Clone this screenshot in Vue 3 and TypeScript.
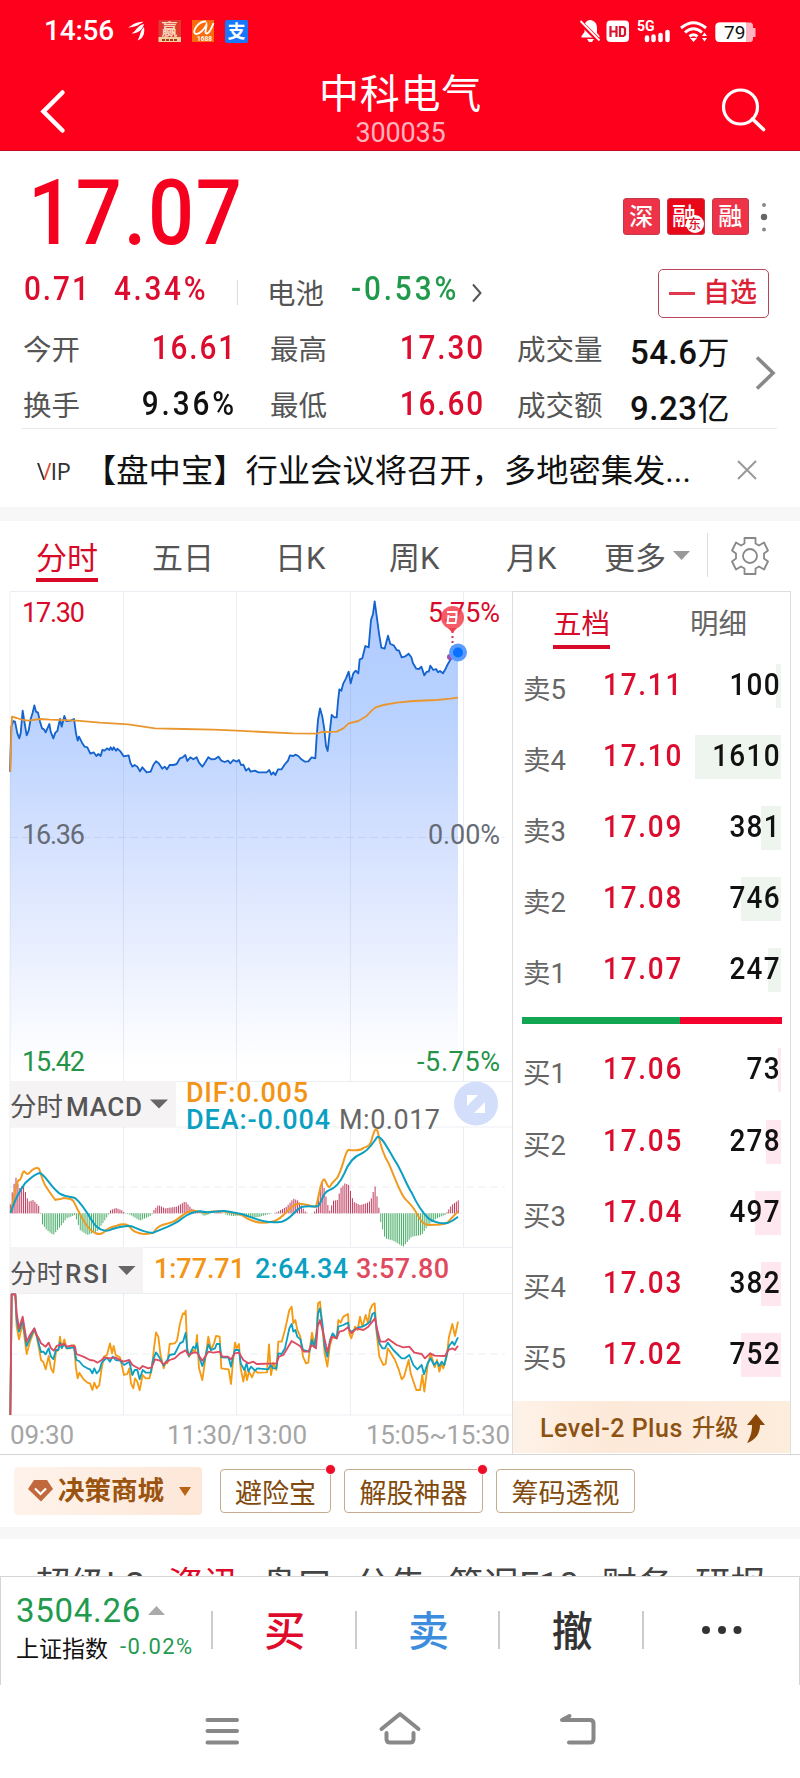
<script setup lang="ts">
interface Level { name: string; price: string; qty: string; bar: number }

const sells: Level[] = [
  { name: '卖5', price: '17.11', qty: '100', bar: 5 },
  { name: '卖4', price: '17.10', qty: '1610', bar: 86 },
  { name: '卖3', price: '17.09', qty: '381', bar: 20 },
  { name: '卖2', price: '17.08', qty: '746', bar: 40 },
  { name: '卖1', price: '17.07', qty: '247', bar: 13 },
]
const buys: Level[] = [
  { name: '买1', price: '17.06', qty: '73', bar: 3 },
  { name: '买2', price: '17.05', qty: '278', bar: 15 },
  { name: '买3', price: '17.04', qty: '497', bar: 26 },
  { name: '买4', price: '17.03', qty: '382', bar: 20 },
  { name: '买5', price: '17.02', qty: '752', bar: 40 },
]

const price =
  '30,755 34,620 40,603 45,605 52,640 58,655 62,640 68,572 74,610 80,646 86,632 92,597 98,578 103,556 108,575 114,578 120,605 126,625 132,628 137,637 148,612 152,635 160,655 166,638 172,633 180,597 185,620 193,588 199,603 212,602 222,597 228,640 233,662 237,650 246,668 254,680 262,682 271,701 281,697 289,708 295,702 302,708 307,690 314,692 321,685 328,690 332,682 337,690 341,682 348,692 352,686 362,695 371,709 386,706 391,728 397,740 404,735 412,740 420,754 427,742 440,757 452,755 460,735 468,724 476,730 487,746 494,740 501,748 509,735 520,735 530,732 540,715 548,712 556,705 562,723 571,712 580,718 590,712 597,728 607,740 615,728 625,712 634,718 645,717 655,710 664,722 674,726 684,722 691,730 700,720 710,725 717,720 723,735 730,734 738,752 746,745 752,755 765,752 775,757 800,757 808,750 814,764 820,757 826,765 834,748 845,748 853,735 864,722 870,706 880,708 886,704 895,708 904,718 915,725 925,724 935,712 946,715 950,650 954,600 960,565 967,590 973,628 978,678 983,693 990,630 995,585 1003,592 1010,592 1014,545 1018,508 1024,512 1030,490 1038,475 1046,455 1052,490 1060,460 1067,452 1075,460 1079,418 1087,415 1096,378 1106,382 1113,300 1119,282 1124,244 1131,295 1137,340 1144,383 1154,386 1164,347 1171,372 1181,376 1190,390 1197,392 1205,412 1216,409 1226,401 1234,412 1239,430 1249,446 1257,447 1264,440 1273,466 1280,455 1286,455 1291,437 1300,450 1308,447 1314,457 1320,453 1329,460 1336,448 1342,435 1349,423 1358,405 1374,398'
const priceArea = `${price} 1374,1640 30,1640`
const average =
  '31,755 34,640 36,590 50,594 65,599 85,602 120,597 150,599 230,602 300,608 385,613 425,619 465,625 550,627 640,629 710,632 790,636 880,640 950,641 965,636 1010,635 1030,625 1046,610 1075,603 1100,588 1115,572 1127,562 1150,555 1190,548 1240,543 1310,540 1350,536 1374,533'

const dif =
  'M32,518 C42,480 46,430 56,420 C64,425 66,395 72,394 C80,402 82,404 88,399 C96,388 110,380 117,386 C124,405 130,430 138,440 C146,452 152,462 166,480 C174,476 180,480 190,474 C204,476 218,474 224,490 C238,520 258,560 275,572 C290,584 302,586 312,576 C322,565 335,560 350,557 C370,550 386,552 395,568 C410,582 440,586 460,578 C475,550 500,555 520,545 C540,535 555,515 575,512 C590,512 605,518 620,518 C660,508 700,518 725,525 C745,540 775,555 815,545 C845,544 865,500 890,492 C910,488 935,500 948,500 C956,475 962,420 973,418 C979,425 984,446 990,440 C1002,415 1010,425 1018,400 C1030,375 1038,325 1048,330 C1065,332 1085,330 1090,324 C1100,318 1110,325 1118,288 C1124,270 1128,258 1134,278 C1142,322 1150,345 1166,370 C1180,400 1195,450 1214,475 C1228,490 1240,500 1250,520 C1260,540 1270,555 1284,555 C1310,552 1330,558 1345,545 C1360,528 1368,520 1374,515'
const dea =
  'M32,518 C44,480 60,450 75,430 C90,415 105,402 119,399 C135,402 150,440 178,460 C195,470 210,470 225,474 C245,490 260,515 278,545 C292,568 315,578 335,568 C355,562 375,555 395,559 C420,570 445,582 460,578 C490,565 525,555 548,534 C570,518 585,515 600,514 C630,522 660,510 680,514 C710,518 735,525 755,532 C785,545 815,550 845,545 C870,540 885,510 905,501 C925,496 945,502 955,498 C968,480 970,455 985,452 C1005,445 1020,430 1033,400 C1045,370 1060,350 1082,342 C1110,330 1120,305 1133,290 C1148,290 1168,335 1190,370 C1210,405 1220,435 1236,460 C1250,490 1270,520 1285,535 C1305,550 1330,552 1345,548 C1360,542 1368,535 1374,530'

const rsi1 =
  '31,1125 35,763 46,763 50,860 57,898 68,850 80,942 90,905 103,870 110,890 118,930 123,960 130,966 137,988 146,948 153,985 160,998 168,935 175,930 180,890 185,925 193,898 200,925 210,925 216,920 222,915 228,985 233,1015 238,998 250,1017 262,1028 270,1030 277,1050 283,1028 290,1045 298,1035 305,985 312,950 321,945 330,910 336,940 341,918 347,945 360,952 372,1005 382,1002 388,985 393,1030 400,1045 405,1015 412,1025 419,1051 428,1005 437,1015 448,1015 455,990 462,925 468,877 475,890 481,940 491,985 497,965 502,970 509,912 524,910 531,902 540,850 549,820 554,823 557,812 562,930 567,950 580,930 586,935 591,885 597,985 607,1020 612,985 625,890 633,930 642,910 648,888 659,890 664,985 686,988 693,1032 698,975 705,908 710,925 717,912 722,985 730,1025 736,990 741,1020 747,995 756,1012 765,990 772,998 801,997 807,913 813,1005 820,968 829,990 835,905 845,905 855,870 868,810 875,800 880,850 886,840 892,870 901,890 909,950 918,970 925,968 929,930 936,878 944,920 951,860 954,790 960,785 967,860 974,940 982,980 990,915 998,890 1010,895 1015,840 1022,848 1030,830 1044,822 1048,880 1054,895 1065,860 1073,870 1080,830 1087,860 1097,825 1104,850 1110,810 1117,795 1124,790 1130,880 1138,950 1150,975 1157,972 1163,925 1173,940 1185,960 1195,985 1205,1018 1212,1010 1226,960 1232,1000 1242,1030 1249,1050 1260,1050 1267,1005 1273,1055 1283,975 1292,940 1304,982 1311,960 1318,995 1325,970 1330,985 1340,950 1347,890 1357,852 1365,888 1374,845'
const rsi2 =
  '31,1125 35,763 46,763 50,840 57,875 68,842 80,918 90,895 103,866 110,886 118,918 123,936 130,935 137,943 146,925 153,950 160,957 168,930 175,930 180,908 185,924 193,913 200,925 222,922 229,960 237,963 250,978 262,985 270,988 277,1000 283,985 290,1000 298,992 305,968 321,953 330,965 338,950 347,960 360,962 372,975 388,965 397,1005 404,990 412,990 419,1018 428,990 438,998 452,998 459,960 468,937 478,952 491,977 502,960 509,945 524,942 540,910 549,905 557,879 562,930 567,948 580,920 586,925 591,910 597,950 607,978 615,955 625,913 633,930 645,925 650,912 659,912 664,952 686,953 693,980 698,955 705,930 717,930 722,970 733,990 740,970 745,995 753,980 765,992 772,985 805,988 812,975 820,985 829,985 835,940 845,942 855,925 868,865 875,852 880,875 886,870 892,890 901,898 909,930 928,935 936,900 942,920 950,880 954,820 960,805 967,850 974,920 982,950 990,900 998,880 1010,895 1015,860 1030,855 1044,848 1048,870 1054,875 1075,862 1087,860 1100,853 1110,845 1117,822 1124,818 1130,870 1138,910 1147,925 1155,925 1163,908 1180,930 1195,945 1205,955 1215,955 1228,945 1240,975 1252,988 1265,975 1272,1003 1283,970 1292,955 1302,975 1311,965 1318,978 1325,965 1333,975 1340,945 1347,918 1357,905 1363,915 1374,892'
const rsi3 =
  '31,1125 35,763 46,763 50,820 57,865 68,830 80,905 90,885 103,865 110,885 118,898 123,910 137,920 146,908 153,925 162,932 170,918 180,915 193,912 200,920 216,916 225,920 229,942 250,950 270,960 283,962 292,968 305,960 313,952 330,955 345,952 370,965 388,960 397,975 419,987 428,978 445,985 455,982 465,958 480,962 491,973 509,960 524,955 540,940 557,931 565,945 580,938 591,938 607,962 625,935 640,938 659,935 667,950 684,950 693,958 705,940 717,938 730,960 745,970 760,965 770,972 829,970 837,950 850,945 875,903 890,912 900,918 912,935 925,935 935,915 948,925 953,860 960,840 970,880 982,935 995,890 1010,895 1018,875 1030,872 1044,862 1054,880 1070,865 1090,870 1105,860 1117,845 1125,835 1132,870 1141,905 1155,905 1165,897 1190,915 1210,922 1228,920 1243,938 1265,942 1275,955 1290,940 1304,947 1335,948 1345,930 1357,925 1365,930 1374,917'

// MACD histogram envelope: [x, signed height]
const envelope: [number, number][] = [
  [30, 20], [36, 60], [47, 110], [58, 75], [70, 85], [85, 35], [100, 40], [118, 20], [122, 0], [125, -30], [140, -50], [160, -65], [185, -35], [200, -15], [225, -5], [240, -50], [262, -65], [290, -55], [315, -20], [328, 0], [332, 10], [348, 16], [368, 8], [375, 0], [390, -4], [420, -22], [455, -6], [462, 10], [475, 25], [495, 15], [530, 20], [556, 36], [575, 14], [592, 8], [600, 0], [612, -8], [630, -2], [660, 5], [680, -5], [700, -8], [730, -6], [750, -15], [780, -10], [800, -4], [820, 0], [830, 3], [860, 20], [880, 44], [895, 38], [915, 6], [925, 0], [940, 0], [950, 15], [958, 75], [968, 95], [978, 50], [988, 5], [1000, 38], [1012, 40], [1022, 75], [1035, 90], [1047, 85], [1060, 35], [1080, 25], [1100, 30], [1112, 38], [1125, 82], [1136, 25], [1138, 0], [1142, -25], [1155, -75], [1180, -82], [1210, -100], [1235, -70], [1265, -65], [1285, -35], [1310, -15], [1335, -5], [1342, 5], [1355, 25], [1376, 40],
]
const heightAt = (x: number): number => {
  for (let i = 1; i < envelope.length; i++) {
    const [x0, h0] = envelope[i - 1]
    const [x1, h1] = envelope[i]
    if (x <= x1) return h0 + ((h1 - h0) * (x - x0)) / (x1 - x0)
  }
  return 0
}
let up = ''
let down = ''
for (let x = 31; x <= 1375; x += 5.67) {
  const h = heightAt(x)
  const seg = `M${x.toFixed(1)},520V${(520 - h).toFixed(1)}`
  if (h > 0) up += seg
  else down += seg
}
const gridX = [123.5, 236.5, 350.5, 463.5]
const periods = ['五日', '日K', '周K', '月K']
</script>

<template>
  <div class="screen">
    <header class="header">
      <div class="status">
        <span class="clock">14:56</span>
        <svg class="left-icons" width="124" height="26" viewBox="126 18 124 26">
          <g fill="#fff">
            <path d="M128 27.500C132 26 134 22 143.500 21.800C140 24 136 27.500 128 27.500Z" />
            <path d="M131.500 33.500C136 31.500 137 25.500 144 24C143 28 140 33.500 131.500 33.500Z" />
            <path d="M137.500 40.500C140.500 36 140 30.500 144 27C145 33 143.500 38.500 137.500 40.500Z" />
          </g>
          <rect x="158.500" y="20" width="22.500" height="22" fill="#e0392f" />
          <rect x="158.500" y="37" width="22.500" height="5" fill="#f3cf9f" />
          <path d="M162 40H178" stroke="#a63d20" stroke-width="2" stroke-dasharray="3 1" />
          <text x="161.500" y="35" font-size="16" fill="#f6d9c0" class="cjk bold">赢</text>
          <rect x="192" y="20" width="22" height="22" fill="#fb6a0b" />
          <path d="M206 21.500C198 21 192.500 31 195 33.500C199 36 205 28 206.500 24.500C207 28 203.500 33.500 207 33.500C210 33 212 27 213.500 23" fill="none" stroke="#fff" stroke-width="1.800" />
          <text x="197" y="41" font-size="6.500" fill="#fff" class="num bold">1688</text>
          <rect x="225" y="20" width="23" height="23" rx="2" fill="#1677ff" />
          <text x="227.500" y="38" font-size="18" fill="#fff" class="cjk bold">支</text>
        </svg>
        <svg class="right-icons" width="178" height="26" viewBox="579 18 178 26">
          <path d="M581.500 37.500V36L584.500 32V27C584.500 23 586 20.500 590 20C595 20.500 597 24 597 28V33L599.500 36V37.500Z M587 39H594L592 42H589Z" fill="#fff" />
          <path d="M580 23.500L600 43" stroke="#ff001c" stroke-width="2.500" /><path d="M580.500 21.500L599.500 40.500" stroke="#ff001c" stroke-width="3.500" /><path d="M580.500 21L599.500 40.500" stroke="#fff" stroke-width="1.800" />
          <rect x="606.500" y="20.500" width="22.500" height="21.500" rx="4" fill="#fff" />
          <path d="M610.500 26V37M616.500 26V37M610.500 31.500H616.500M620 27V36H623.500L625 34.500V28.500L623.500 27Z" fill="none" stroke="#d6142a" stroke-width="2.200" />
          <text x="637" y="31" font-size="14" fill="#fff" class="num bold">5G</text>
          <path d="M647 37.500V40M653.500 36.500V40M660.500 35V40M667.500 32V40" stroke="#fff" stroke-width="4.500" stroke-linecap="round" />
          <g fill="none" stroke="#fff" stroke-width="3"><path d="M681 28Q693.500 17.500 706 28" /><path d="M685 32.500Q693.500 25 702 32.500" /><path d="M689.500 36.500Q693.500 33 697.500 36.500" /></g>
          <path d="M690 38L693.500 42L697 38Z M702 36L704.500 32.500L707 36Z M702 38L704.500 41.500L707 38Z" fill="#fff" />
          <path d="M720 22.500H750Q753 22.500 753 26V28H755.500V37H753V39Q753 42 750 42H720Q715.500 42 715.500 38V26Q715.500 22.500 720 22.500Z" fill="#ffb3c0" />
          <path d="M746 22.500H720Q715.500 22.500 715.500 26V38Q715.500 42 720 42H746Z" fill="#fff" />
          <text x="724" y="39" font-size="19" fill="#111" class="num">79</text>
        </svg>
      </div>
      <div class="titlebar">
        <svg class="back" width="28" height="48" viewBox="0 0 28 48"><path d="M23.500 5.500L4.500 24.500L23.500 43.500" fill="none" stroke="#fff" stroke-width="4.500" stroke-linecap="round" /></svg>
        <div class="title"><h1>中科电气</h1><p>300035</p></div>
        <svg class="search" width="46" height="46" viewBox="0 0 46 46"><circle cx="19.500" cy="20" r="17" fill="none" stroke="#fff" stroke-width="3.200" /><path d="M31.500 32L42.500 42.500" stroke="#fff" stroke-width="3.600" stroke-linecap="round" /></svg>
      </div>
    </header>

    <section class="quote">
      <div class="hero">
        <strong>17.07</strong>
        <div class="badges">
          <span class="badge">深</span>
          <span class="badge deep">融<i>东</i></span>
          <span class="badge">融</span>
          <svg width="10" height="32" viewBox="0 0 10 32"><circle cx="5" cy="4" r="2" fill="#888" /><circle cx="5" cy="16" r="3.200" fill="#666" /><circle cx="5" cy="28.500" r="2" fill="#888" /></svg>
        </div>
      </div>
      <div class="change">
        <span class="delta red">0.71</span><span class="pct red">4.34%</span>
        <span class="bar"></span><span class="sector">电池</span>
        <span class="spct green">-0.53%</span>
        <svg class="go" width="12" height="20" viewBox="0 0 12 20"><path d="M2 1.500L9.500 10L2 18.500" fill="none" stroke="#555" stroke-width="2" /></svg>
        <button><i></i>自选</button>
      </div>
      <div class="stats">
        <span>今开</span><b class="red">16.61</b><span>最高</span><b class="red">17.30</b><span>成交量</span><em>54.6<i>万</i></em>
        <span>换手</span><b class="pc">9.36%</b><span>最低</span><b class="red">16.60</b><span>成交额</span><em>9.23<i>亿</i></em>
        <svg class="more" width="22" height="36" viewBox="0 0 22 36"><path d="M2 2.500L18 18L2 33.500" fill="none" stroke="#888" stroke-width="3.600" /></svg>
      </div>
      <div class="news">
        <span class="vip"><i>V</i>IP</span>
        <p>【盘中宝】行业会议将召开，多地密集发...</p>
        <svg width="20" height="20" viewBox="0 0 20 20"><path d="M1 1L19 19M19 1L1 19" stroke="#999" stroke-width="2" /></svg>
      </div>
    </section>

    <nav class="periods">
      <span class="active">分时</span>
      <span v-for="p in periods" :key="p" class="period">{{ p }}</span>
      <span class="morep">更多</span>
      <svg class="tri" width="17" height="9" viewBox="0 0 17 9"><path d="M0 0H17L8.500 9Z" fill="#999" /></svg>
      <i class="vbar"></i>
      <svg class="gear" width="40" height="40" viewBox="-20 -20 40 40" fill="none" stroke="#888" stroke-width="1.800" stroke-linejoin="round">
        <path d="M-5.500 -18H5.500V-12.500L9 -10.500L14 -13.500L18 -5.500L14 -2.500V2.500L18 5.500L14 13.500L9 10.500L5.500 12.500V18H-5.500V12.500L-9 10.500L-14 13.500L-18 5.500L-14 2.500V-2.500L-18 -5.500L-14 -13.500L-9 -10.500L-5.500 -12.500Z" />
        <circle r="7" />
      </svg>
    </nav>

    <main class="board">
      <svg class="charts" width="503" height="864" viewBox="9 591 503 864">
        <defs>
          <linearGradient id="area" x1="0" y1="240" x2="0" y2="1640" gradientUnits="userSpaceOnUse">
            <stop offset="0" stop-color="#afcaff" /><stop offset=".25" stop-color="#b9d2ff" /><stop offset=".5" stop-color="#d3e0ff" /><stop offset=".75" stop-color="#e9effe" /><stop offset="1" stop-color="#ffffff" />
          </linearGradient>
        </defs>
        <g transform="translate(0 520) scale(.33333)"><polygon :points="priceArea" fill="url(#area)" /></g>
        <g stroke="#6478a0" stroke-opacity=".13">
          <path v-for="x in gridX" :key="x" :d="`M${x} 592V1081M${x} 1127V1247M${x} 1293V1415`" />
          <path d="M10 591.500H512M10 1081.500H512M10 1127H512M10 1247.500H512M10 1293.500H512M10 1415H512M10 592V1415" />
          <path d="M10 837.500H505M10 1187H505M10 1354H505M10 1213.500H463" stroke-dasharray="8 4" />
        </g>
        <g fill="none" transform="translate(0 520) scale(.33333)" stroke-linejoin="round">
          <polyline :points="price" stroke="#1463ce" stroke-width="5.500" />
          <polyline :points="average" stroke="#e9962f" stroke-width="5.500" />
        </g>
        <g class="num" font-size="27">
          <g fill="#d80a29"><text x="22" y="621.500" textLength="63">17.30</text><text x="428" y="621.500" textLength="72">5.75%</text></g>
          <g fill="#666c76"><text x="22" y="844" textLength="63">16.36</text><text x="428" y="844" textLength="72">0.00%</text></g>
          <g fill="#259348"><text x="22" y="1071" textLength="63">15.42</text><text x="417" y="1071" textLength="83">-5.75%</text></g>
        </g>
        <path d="M452.500 631V658" stroke="#cc3355" stroke-width="2" stroke-dasharray="2 3" />
        <path d="M448 628L452.500 633L457 628Z" fill="#f3404e" />
        <circle cx="452.500" cy="617.500" r="11.500" fill="#f3404e" fill-opacity=".85" />
        <path d="M447 612H456.500V617H449.500M456.500 617L455.500 623H447.500L448.500 615" fill="none" stroke="#fff" stroke-width="2" />
        <circle cx="450" cy="657" r="3" fill="#a34bb0" /><circle cx="458" cy="652.500" r="9" fill="#5a9bff" /><circle cx="458" cy="652.500" r="5" fill="#0871ff" />

        <rect x="10" y="1081" width="166" height="46" fill="#f6f3f5" /><rect x="10" y="1247" width="133" height="46" fill="#f6f3f5" />
        <g class="num" font-size="26" fill="#555" stroke-width="0">
          <text x="10" y="1116" font-size="26.500">分时</text><text x="66" y="1115.500" textLength="76" class="mid">MACD</text>
          <text x="10" y="1283" font-size="26.500">分时</text><text x="65" y="1282.500" textLength="43" class="mid">RSI</text>
        </g>
        <path d="M150 1099.500H168L159 1108.500ZM118 1266H135.500L126.700 1275Z" fill="#666" />
        <g class="num mid" font-size="27">
          <text x="186" y="1102" textLength="122" fill="#f39416">DIF:0.005</text>
          <text x="186" y="1129" textLength="144" fill="#0aa0c2">DEA:-0.004</text>
          <text x="339" y="1129" textLength="101" fill="#666" class="thin">M:0.017</text>
          <text x="154" y="1278" textLength="91" fill="#f39416">1:77.71</text>
          <text x="255" y="1278" textLength="93" fill="#0aa0c2">2:64.34</text>
          <text x="356" y="1278" textLength="93" fill="#e0495e">3:57.80</text>
        </g>
        <circle cx="476" cy="1103.500" r="22" fill="#d3defb" />
        <path d="M467 1095H478L467 1106ZM485 1102V1113H474Z" fill="#fff" />
        <g fill="none" stroke-linejoin="round" stroke-width="5" transform="translate(0 1040) scale(.33333)">
          <path :d="up" stroke="#c03a5c" stroke-width="3" /><path :d="down" stroke="#49ad68" stroke-width="3" />
          <path :d="dif" stroke="#f09a20" stroke-width="6" /><path :d="dea" stroke="#0b9fc2" stroke-width="6" />
          <polyline :points="rsi1" stroke="#f49b13" stroke-width="5.500" /><polyline :points="rsi2" stroke="#0b9fc2" stroke-width="5.500" /><polyline :points="rsi3" stroke="#de4a60" stroke-width="5.500" />
        </g>
        <g class="num" font-size="26" fill="#a5a5a5">
          <text x="10" y="1444" textLength="64">09:30</text><text x="167" y="1444" textLength="140">11:30/13:00</text><text x="366" y="1444" textLength="144">15:05~15:30</text>
        </g>
      </svg>

      <aside class="book">
        <div class="btabs"><span class="on">五档</span><span>明细</span></div>
        <div v-for="l in sells" :key="l.name" class="level">
          <span>{{ l.name }}</span><b>{{ l.price }}</b><em><i class="sellbar" :style="{ width: l.bar + 'px' }"></i><u>{{ l.qty }}</u></em>
        </div>
        <div class="ratio"></div>
        <div v-for="l in buys" :key="l.name" class="level">
          <span>{{ l.name }}</span><b>{{ l.price }}</b><em><i class="buybar" :style="{ width: l.bar + 'px' }"></i><u>{{ l.qty }}</u></em>
        </div>
        <div class="upgrade"><span>Level-2 Plus</span><small>升级</small>
          <svg width="20" height="30" viewBox="0 0 20 30"><path d="M10 0L19 11H14C14 19 10 26 1 29C5 22 6 17 6 11H1Z" fill="#8a4708" /></svg>
        </div>
      </aside>
    </main>

    <section class="tools">
      <div class="mall">
        <svg width="25" height="22" viewBox="0 0 25 22"><path d="M6 0H19L25 9L13 21.500L0 9Z" fill="#c1683d" /><path d="M7 8.500L12.500 14L18 8.500" fill="none" stroke="#fff" stroke-width="2.200" /></svg>
        <b>决策商城</b>
        <svg width="12" height="9" viewBox="0 0 12 9"><path d="M0 0H12L6 9Z" fill="#b86414" /></svg>
      </div>
      <div class="tool t1">避险宝<i></i></div>
      <div class="tool t2">解股神器<i></i></div>
      <div class="tool t3">筹码透视</div>
    </section>

    <nav class="infos">
      <span>超级L2</span><span class="cur">资讯</span><span>盘口</span><span>公告</span><span>简况F10</span><span>财务</span><span>研报</span>
    </nav>

    <footer class="trade">
      <div class="index">
        <p class="idx"><b>3504.26</b><svg width="17" height="9" viewBox="0 0 17 9"><path d="M0 9H17L8.500 0Z" fill="#aaa" /></svg></p>
        <p class="sub"><span>上证指数</span><em>-0.02%</em></p>
      </div>
      <span class="act buy">买</span><span class="act sell">卖</span><span class="act">撤</span>
      <span class="act dots"><svg width="40" height="10" viewBox="0 0 40 10" fill="#333"><circle cx="4" cy="5" r="4" /><circle cx="20" cy="5" r="4" /><circle cx="35.500" cy="5" r="4" /></svg></span>
    </footer>

    <div class="sysnav">
      <svg width="800" height="93" viewBox="0 1685 800 93" fill="none" stroke="#888" stroke-width="4" stroke-linecap="round" stroke-linejoin="round">
        <path d="M207.500 1720H237M207.500 1731H237M207.500 1742.500H237" />
        <path d="M381.500 1729L400 1714L418.500 1729M386.500 1733V1739Q386.500 1742.500 390 1742.500H410Q413.500 1742.500 413.500 1739V1733" />
        <path d="M569.500 1716L562 1720H590Q593.500 1720 593.500 1723.500V1739Q593.500 1742.500 590 1742.500H569" />
      </svg>
    </div>
  </div>
</template>

<style>
html, body { margin: 0; background: #fff; }
</style>

<style scoped>
.screen { width: 800px; height: 1778px; overflow: hidden; background: #fff; color: #111; font-family: Roboto, "Noto Sans CJK SC", sans-serif; }
.screen * { box-sizing: border-box; }
.screen svg { display: block; flex: none; }
h1, p { margin: 0; font-weight: 400; }
i, em { font-style: normal; }
u { text-decoration: none; }
span, b, em, p, strong { white-space: nowrap; }
.cjk { font-family: "Noto Sans CJK SC", sans-serif; }
.num { font-family: Roboto, "Noto Sans CJK SC", sans-serif; }
.bold { font-weight: 700; }
.mid { font-weight: 500; }
.thin { font-weight: 400; }
.red { color: #db0c2d; }
.green { color: #21994b; }

.header { height: 151px; background: #ff001c; border-bottom: 1px solid #c40a20; color: #fff; }
.status { display: flex; height: 62px; align-items: center; padding-left: 44px; }
.clock { width: 82px; font-size: 28px; letter-spacing: -.2px; font-weight: 500; line-height: 62px; }
.right-icons { margin-left: 329px; }
.titlebar { display: flex; height: 88px; justify-content: space-between; padding: 0 33px 0 39px; }
.back { margin-top: 24.500px; }
.title { width: 200px; text-align: center; margin-left: 13px; }
.title h1 { font-size: 40px; letter-spacing: .7px; line-height: 52px; height: 52px; margin-top: 7px; }
.title p { font-size: 27px; line-height: 30px; margin-top: -3px; color: #ffb3bc; letter-spacing: -.2px; }
.search { margin-top: 25px; }

/* Figures are drawn in a slightly condensed cut with open tracking. */
.hero strong, .delta, .pct, .spct, .level b { transform: scaleX(.9); transform-origin: left; }
.stats b, .level u { transform: scaleX(.9); transform-origin: right; }

.quote { height: 370px; border-bottom: 14px solid #f7f7f7; }
.hero { height: 113px; padding: 12px 31px 0 28px; display: flex; justify-content: space-between; align-items: center; }
.hero strong { font-size: 90px; line-height: 104px; font-weight: 500; color: #f5001f; letter-spacing: 2px; }
.badges { display: flex; align-items: center; gap: 7px; margin-top: 6px; }
.badge { width: 37.500px; height: 37.500px; border-radius: 3px; background: #ee3348; border: 1px solid #c43a49; color: #fff; font-size: 24px; line-height: 37px; text-align: center; font-weight: 500; position: relative; }
.badge.deep { background: #e9071a; text-align: left; padding-left: 4px; }
.badge i { position: absolute; right: 0; bottom: 1px; width: 18px; height: 18px; border-radius: 9px; background: #fff; color: #d5182a; font-size: 13px; line-height: 18px; text-align: center; }
.badges svg { margin-left: 3px; }
.change { height: 57px; display: flex; align-items: center; padding-left: 24px; font-size: 33px; line-height: 48px; }
.delta, .pct, .spct { font-weight: 500; height: 56px; letter-spacing: 2.200px; }
.delta { width: 90px; }
.pct { width: 123px; letter-spacing: 3px; }
.bar { width: 1px; height: 25px; background: #ddd; margin-right: 29px; }
.sector { font-size: 28.500px; width: 84px; color: #555; line-height: 51px; height: 48px; }
.spct { width: 120px; letter-spacing: 3.200px; }
.go { margin: 0 175px 0 0; }
.change button { width: 111px; height: 49px; margin-top: 2px; padding: 0 0 0 10px; display: flex; align-items: center; background: #fff; border: 1.500px solid #b8455a; border-radius: 5px; color: #dc2036; font: 500 27px/49px Roboto, "Noto Sans CJK SC", sans-serif; white-space: nowrap; }
.change button i { width: 26px; height: 3.500px; background: #e0394b; margin-right: 8px; flex: none; }
.stats { height: 108px; margin-left: 22px; width: 755px; border-bottom: 1px solid #e8e8e8; display: grid; grid-template-columns: 88px 127px 92px 156px 114px 178px; grid-template-rows: 56px 52px; align-items: start; position: relative; font-size: 28.500px; line-height: 59px; }
.stats span { color: #555; padding-left: 1px; height: 52px; }
.stats span:nth-child(6n + 3) { padding-left: 33px; }
.stats span:nth-child(6n + 5) { padding-left: 32px; }
.stats b { font-size: 33px; line-height: 53px; height: 52px; font-weight: 500; text-align: right; letter-spacing: 2.100px; }
.stats .pc { letter-spacing: 3.200px; }
.stats em { font-size: 33px; line-height: 64px; height: 52px; padding-left: 31px; font-weight: 500; letter-spacing: .5px; color: #111; }
.stats em i { font-weight: 400; font-size: 32px; }
.stats .more { position: absolute; right: 0; top: 34px; }
.news { height: 77px; display: flex; align-items: center; padding: 5px 0 0 37px; }
.vip { width: 47px; font-family: "Open Sans", sans-serif; font-size: 24px; letter-spacing: -.7px; color: #333; }
.vip i { color: transparent; background: linear-gradient(90deg, #333 52%, #e0543c 52%); background-clip: text; -webkit-background-clip: text; }
.news p { width: 653px; font-size: 32.300px; line-height: 46px; padding-top: 2px; }

.periods { height: 70px; display: flex; align-items: flex-start; font-size: 31px; line-height: 75px; color: #555; }
.active { margin-left: 36px; width: 62px; height: 61px; border-bottom: 4px solid #d80a27; color: #d80a27; }
.period { width: 114px; }
.active + .period { margin-left: 54px; width: 123px; }
.periods .period:nth-child(4) { width: 117px; }
.morep { width: 69px; margin-left: -16px; }
.tri { margin-top: 30px; }
.vbar { width: 1px; height: 44px; background: #ddd; margin: 12px 22px 0 17px; }
.gear { margin-top: 15px; }

.board { height: 864px; border-bottom: 1px solid #d6d6d6; display: flex; padding-left: 9px; }
.book { width: 279px; border: 1px solid #ddd; border-bottom: 0; }
.btabs { height: 72px; display: flex; padding-left: 40px; font-size: 28.500px; line-height: 65px; color: #666; }
.btabs span { width: 58px; height: 57px; margin-right: 80px; }
.btabs .on { color: #d80a27; border-bottom: 4px solid #d80a27; }
.level { display: flex; height: 71.100px; padding-left: 10px; }
.level span { width: 80px; font-size: 27.500px; line-height: 52px; color: #666; }
.level b { width: 92px; font-size: 31px; line-height: 42px; font-weight: 500; color: #db0c2d; letter-spacing: 2px; }
.level em { flex: none; width: 86px; height: 44px; font-size: 31px; line-height: 42px; position: relative; z-index: 0; font-weight: 500; }
.level u { display: block; text-align: right; letter-spacing: 1.500px; padding-right: 0; }
.level i { position: absolute; right: 0; top: 0; height: 44px; z-index: -1; }
.sellbar { background: #eef5ee; }
.buybar { background: #fee7ee; }
.ratio { height: 7px; width: 260px; margin: -2px 0 24px 9px; background: linear-gradient(90deg, #12a652 0 158px, #f5002c 158px); }
.upgrade { height: 52px; margin-top: -3px; display: flex; align-items: center; padding-left: 27px; background: linear-gradient(90deg, #fef2e8, #fde9d8 35%, #fdebdd 75%, #fdeddb); color: #8c5212; font-size: 25px; line-height: 47px; font-weight: 500; padding-top: 4px; }
.upgrade span { width: 152px; letter-spacing: .5px; }
.upgrade small { font-size: 23.300px; width: 54px; white-space: nowrap; }

.tools { height: 84px; display: flex; align-items: flex-start; border-bottom: 12px solid #f7f7f7; color: #824a0c; }
.mall { width: 188px; height: 48px; margin: 12px 18px 0 14px; padding-left: 14px; border-radius: 4px; background: linear-gradient(90deg, #fef3eb, #fde7d8); display: flex; align-items: center; }
.mall b { width: 126px; padding-left: 5px; font-size: 26.500px; line-height: 48px; color: #9a540f; }
.tool { height: 44px; margin: 14px 13px 0 0; border: 1px solid #c6ac8e; border-radius: 4px; font-size: 27px; line-height: 48px; text-align: center; position: relative; white-space: nowrap; }
.tool i { position: absolute; right: -6px; top: -6px; width: 11px; height: 11px; border-radius: 6px; background: #ee0c26; border: 1px solid #fff; }
.t1 { width: 111px; } .t2 { width: 139px; } .t3 { width: 139px; }
.infos { height: 37px; overflow: hidden; display: flex; justify-content: space-between; padding: 20px 34px 0 35px; font-size: 35.500px; line-height: 52px; color: #444; }
.infos .cur { color: #e00a28; }

.trade { height: 109px; border: 1px solid #d5d5d5; border-bottom: 0; display: flex; }
.index { width: 210px; padding-left: 15px; }
.idx { height: 52px; display: flex; align-items: center; padding-top: 14px; }
.idx b { width: 132px; color: #229a4d; font-weight: 400; font-size: 33px; letter-spacing: .7px; }
.sub { display: flex; height: 40px; font-size: 23px; line-height: 42px; }
.sub span { width: 104px; }
.sub em { color: #259a50; font-size: 22px; line-height: 35px; letter-spacing: 1.400px; }
.act { width: 143.700px; height: 38px; margin-top: 34px; border-left: 2px solid #ccc; display: flex; align-items: center; justify-content: center; font-size: 41px; line-height: 44px; font-weight: 500; color: #333; padding: 4px 0 0 2px; }
.act.dots { padding: 0 0 0 15px; }
.buy { color: #e00a2a; } .sell { color: #3c8ddd; }
.sysnav { height: 93px; }
</style>
